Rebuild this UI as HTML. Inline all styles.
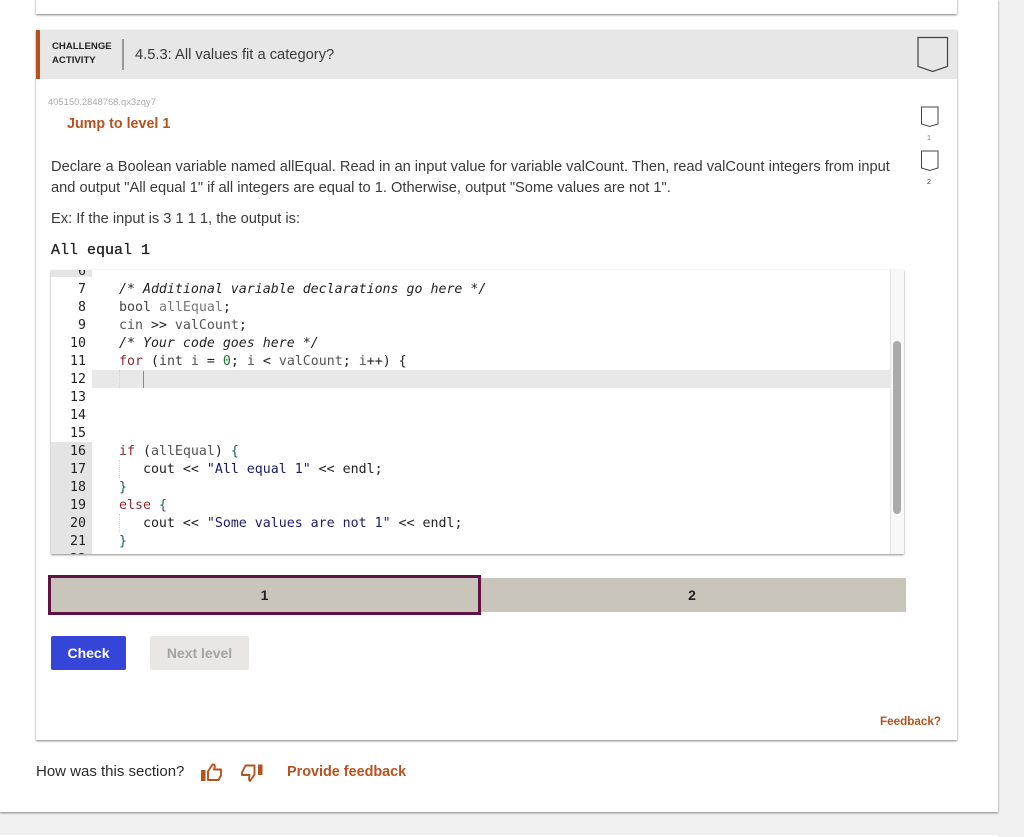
<!DOCTYPE html>
<html><head><meta charset="utf-8"><style>
html,body{margin:0;padding:0;width:1024px;height:837px;overflow:hidden;background:#f0f0f0;font-family:"Liberation Sans",sans-serif;color:#222}
.a{position:absolute;white-space:nowrap}
.o{color:#b4531f;font-weight:bold}
.code{font-family:"DejaVu Sans Mono",monospace;font-size:13.28px;line-height:18px;color:#333}
.ln{left:51px;width:35px;text-align:right;color:#222}
.c{left:119px;color:#222}
.k{color:#8a2a3a}.g{color:#555}.d{color:#444}.b{color:#1d5c5c}.s{color:#1a1a66}.i{font-style:italic;color:#222}
.vg{position:absolute;width:0;border-left:1px dotted #d4d4d4;left:119px;height:18px}
</style></head><body>
<div class="a" style="left:0;top:835px;width:998px;height:2px;background:#fff"></div>
<div class="a" style="left:0;top:0;width:998px;height:812px;background:#fff;box-shadow:0 1px 2px rgba(0,0,0,.45)"></div>
<div class="a" style="left:36px;top:-10px;width:921px;height:24px;background:#fff;box-shadow:0 1px 2px rgba(0,0,0,.5)"></div>
<div class="a" style="left:36px;top:30px;width:921px;height:710px;background:#fff;box-shadow:0 1px 2px rgba(0,0,0,.5)"></div>
<div class="a" style="left:36px;top:30px;width:921px;height:49px;background:#e7e7e7"></div>
<div class="a" style="left:36px;top:30px;width:4px;height:49px;background:#b4531f"></div>
<div class="a" style="left:52px;top:40px;font-size:9.6px;line-height:14px;font-weight:bold;color:#222">CHALLENGE<br>ACTIVITY</div>
<div class="a" style="left:122px;top:39px;width:2px;height:31px;background:#999"></div>
<div class="a" style="left:135px;top:46px;font-size:14.7px;line-height:18px;color:#3a3a3a">4.5.3: All values fit a category?</div>
<svg class="a" style="left:917px;top:36px" width="32" height="38" fill="none" stroke="#444" stroke-width="1.2"><path d="M1 1.5H30.5V30.5L15.7 35.5L1 30.5Z"/></svg>
<div class="a" style="left:48px;top:97px;font-size:9.4px;line-height:10px;color:#aaa">405150.2848768.qx3zqy7</div>
<div class="a o" style="left:67px;top:116px;font-size:14.3px;line-height:17px">Jump to level 1</div>
<svg class="a" style="left:921px;top:106px" width="18" height="22" fill="none" stroke="#444" stroke-width="1"><path d="M.5 1H17V18L8.7 20.5L.5 18Z"/></svg>
<div class="a" style="left:923px;top:133px;width:12px;text-align:center;font-size:7.5px;color:#888">1</div>
<svg class="a" style="left:921px;top:150px" width="18" height="22" fill="none" stroke="#444" stroke-width="1"><path d="M.5 1H17V18L8.7 20.5L.5 18Z"/></svg>
<div class="a" style="left:923px;top:177px;width:12px;text-align:center;font-size:7.5px;color:#444">2</div>
<div class="a" style="left:51px;top:157px;font-size:14.65px;line-height:21px;color:#3a3a3a">Declare a Boolean variable named allEqual. Read in an input value for variable valCount. Then, read valCount integers from input<br>and output "All equal 1" if all integers are equal to 1. Otherwise, output "Some values are not 1".</div>
<div class="a" style="left:51px;top:209px;font-size:14.65px;line-height:21px;color:#3a3a3a">Ex: If the input is 3 1 1 1, the output is:</div>
<div class="a" style="left:51px;top:242px;font-family:'Liberation Mono',monospace;font-size:15px;line-height:18px;color:#222;-webkit-text-stroke:.3px #222">All equal 1</div>
<div class="a" style="left:51px;top:270px;width:853px;height:284px;background:#fff;box-shadow:0 1px 2px rgba(0,0,0,.45);overflow:hidden" id="ed"></div>
<div class="a" style="left:51px;top:270px;width:853px;height:284px;overflow:hidden">
<div class="a" style="left:0;top:0;width:41px;height:7px;background:#e4e4e4"></div>
<div class="a" style="left:0;top:172px;width:41px;height:112px;background:#e4e4e4"></div>
<div class="a" style="left:41px;top:100px;width:798px;height:18px;background:#e8e8e8"></div>
<div class="a" style="left:92px;top:101px;width:1px;height:17px;background:#888"></div>
<div class="a" style="left:839px;top:0;width:14px;height:284px;background:#f8f8f8;border-left:1px solid #e2e2e2"></div>
<div class="a" style="left:842px;top:71px;width:8px;height:173px;background:#aaa;border-radius:4px"></div>
</div>
<div class="a" style="left:51px;top:270px;width:853px;height:284px;overflow:hidden">
<div style="position:absolute;left:-51px;top:-270px;width:1024px;height:837px" class="code">
<div class="vg" style="top:370px"></div><div class="vg" style="top:460px"></div><div class="vg" style="top:514px"></div>
<div class="a ln" style="top:263px">6</div>
<div class="a ln" style="top:281px">7</div>
<div class="a ln" style="top:299px">8</div>
<div class="a ln" style="top:317px">9</div>
<div class="a ln" style="top:335px">10</div>
<div class="a ln" style="top:353px">11</div>
<div class="a ln" style="top:371px">12</div>
<div class="a ln" style="top:389px">13</div>
<div class="a ln" style="top:407px">14</div>
<div class="a ln" style="top:425px">15</div>
<div class="a ln" style="top:443px">16</div>
<div class="a ln" style="top:461px">17</div>
<div class="a ln" style="top:479px">18</div>
<div class="a ln" style="top:497px">19</div>
<div class="a ln" style="top:515px">20</div>
<div class="a ln" style="top:533px">21</div>
<div class="a ln" style="top:551px">22</div>
<div class="a c i" style="top:281px">/* Additional variable declarations go here */</div>
<div class="a c" style="top:299px"><span class="d">bool</span> <span style="color:#777">allEqual</span>;</div>
<div class="a c" style="top:317px"><span class="g">cin</span> &gt;&gt; <span class="g">valCount</span>;</div>
<div class="a c i" style="top:335px">/* Your code goes here */</div>
<div class="a c" style="top:353px"><span class="k">for</span> (<span class="d">int</span> <span class="g">i</span> = <span style="color:#1d6b3c">0</span>; <span class="g">i</span> &lt; <span class="g">valCount</span>; <span class="g">i</span>++) {</div>
<div class="a c" style="top:443px"><span class="k">if</span> (<span class="g">allEqual</span>) <span class="b">{</span></div>
<div class="a c" style="top:461px">&nbsp;&nbsp;&nbsp;cout &lt;&lt; <span class="s">"All equal 1"</span> &lt;&lt; endl;</div>
<div class="a c b" style="top:479px">}</div>
<div class="a c" style="top:497px"><span class="k">else</span> <span class="b">{</span></div>
<div class="a c" style="top:515px">&nbsp;&nbsp;&nbsp;cout &lt;&lt; <span class="s">"Some values are not 1"</span> &lt;&lt; endl;</div>
<div class="a c b" style="top:533px">}</div>
</div></div>
<div class="a" style="left:480px;top:578px;width:426px;height:34px;background:#c9c5bb;text-align:center;font-size:14px;font-weight:bold;line-height:34px;color:#222;text-indent:-2px">2</div>
<div class="a" style="left:48px;top:575px;width:427px;height:34px;background:#c9c5bb;border:3px solid #5f1243;text-align:center;font-size:14px;font-weight:bold;line-height:34px;color:#222">1</div>
<div class="a" style="left:51px;top:636px;width:75px;height:34px;background:#3545d8;border-radius:2px;color:#fff;font-size:14px;font-weight:bold;line-height:34px;text-align:center">Check</div>
<div class="a" style="left:150px;top:636px;width:99px;height:34px;background:#e9e7e4;border-radius:2px;color:#a3a3a3;font-size:14px;font-weight:bold;line-height:34px;text-align:center">Next level</div>
<div class="a o" style="left:880px;top:714px;font-size:11.7px;line-height:15px">Feedback?</div>
<div class="a" style="left:36px;top:763px;font-size:15px;line-height:18px;color:#2a2a2a">How was this section?</div>
<svg class="a" style="left:200px;top:760px" width="24" height="24" fill="none" stroke="#b4531f" stroke-linejoin="round"><rect x="1" y="10" width="4.5" height="11" fill="#b4531f" stroke="none"/><path stroke-width="1.9" d="M8 20V11.5L12.5 4.5Q15 4 14.8 6.5L14 9.5H21V15.5L18.5 20Z"/></svg>
<svg class="a" style="left:240px;top:760px" width="24" height="24" fill="none" stroke="#b4531f" stroke-linejoin="round"><rect x="18" y="4.5" width="4.5" height="10.5" fill="#b4531f" stroke="none"/><path stroke-width="1.9" d="M14.5 5.5H5.5L2 12.5V15H9.5L9 19.5L10 21L14.5 14.5Z"/></svg>
<div class="a o" style="left:287px;top:763px;font-size:14.4px;line-height:18px">Provide feedback</div>
</body></html>
